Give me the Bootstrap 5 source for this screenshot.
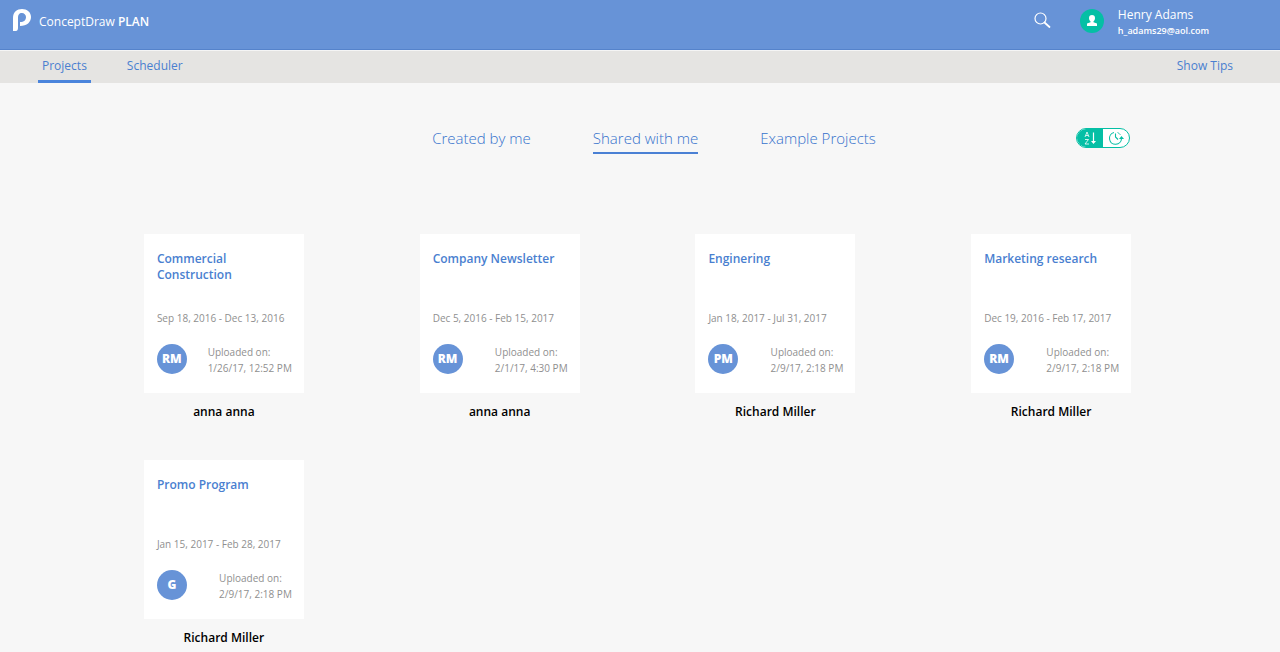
<!DOCTYPE html>
<html lang="en">
<head>
<meta charset="utf-8">
<meta name="viewport" content="width=device-width, initial-scale=1">
<title>ConceptDraw PLAN</title>
<link rel="stylesheet" href="https://cdn.jsdelivr.net/npm/bootstrap@5.3.0/dist/css/bootstrap.min.css">
<style>
  body { font-family: "Open Sans", "Noto Sans", sans-serif; font-size: 12px; line-height: 16px; background: #f7f7f7; color: #000; }
  a { text-decoration: none; }
  .topbar { background: #6793d7; height: 50px; padding: 0 71px 0 12px; color: #fff; border-bottom: 1px solid #5583cb; }
  .brand { color: #fff; padding-top: 8px; gap: 8px; line-height: 28px; }
  .tools { padding-top: 6px; }
  .search-btn { margin: 6px 29px 0 0; line-height: 0; }
  .user-link { color: #fff; gap: 14px; font-weight: 500; }
  .user-link svg { margin-top: 3px; }
  .user-text { padding-top: 1px; }
  .mail { font-size: 9px; font-weight: 600; }
  .subnav { background: #e5e4e2; height: 33px; padding: 0 47px 0 38px; border-top: 1px solid #f5f5f5; }
  .main-links { gap: 32px; }
  .subnav a { color: #4a7fd0; padding: 7px 4px 6px; border-bottom: 3px solid transparent; }
  .subnav a.active { border-bottom-color: #4a84dc; }
  .tab-bar { padding: 45px 150px 0 144px; }
  .filter-tabs { gap: 62px; padding-left: 88px; }
  .filter-tabs a { color: #3571cc; font-size: 15px; font-weight: 300; line-height: 20px; padding-bottom: 4px; border-bottom: 2px solid transparent; }
  .filter-tabs a.active { border-bottom-color: #4a80d4; }
  .sort-toggle { width: 54px; height: 20px; border: 1px solid #05bfa5; border-radius: 10px; background: #fff; overflow: hidden; }
  .sort-toggle button { border: 0; padding: 0; line-height: 0; background: none; color: #05bfa5; }
  .sort-toggle button.active { background: #05bfa5; color: #fff; }
  .projects { padding: 80px 91px 0 86px; }
  .project { width: 160px; margin-bottom: 40px; }
  .tile { height: 159px; background: #fff; padding: 17px 12px 0 13px; }
  .tile h2 { font-size: 12px; line-height: 16px; font-weight: 600; height: 59px; color: #4a7fd0; margin: 0; }
  .tile h2 a { color: inherit; }
  .meta { font-size: 10px; color: #8f8f8f; }
  .uploader { padding-top: 18px; }
  .initials { width: 30px; height: 30px; background: #6793d7; color: #fff; font-size: 12px; font-weight: 800; }
  .owner { font-weight: 600; padding-top: 11px; }
</style>
</head>
<body>
<header class="topbar d-flex justify-content-between align-items-start">
  <a href="#" class="brand d-flex">
    <svg width="19" height="24" viewBox="0 0 19 24" aria-hidden="true"><path d="M1 23V10C1 4 5 1 10 1c5 0 9 3 9 8 0 5-4 9-11 9v-4c4 0 6-2 6-5 0-2-2-4-4-4-3 0-4 2-4 5v10c0 2-1 3-2 3z" fill="#fff"/></svg>
    <span>ConceptDraw <span class="fw-semibold">PLAN</span></span>
  </a>
  <div class="tools d-flex align-items-start">
    <button type="button" class="search-btn btn p-0 border-0" aria-label="Search">
      <svg width="17" height="17" viewBox="0 0 17 17" fill="none" stroke="#fff"><circle cx="6.500" cy="6.500" r="5.500" stroke-width="1.200"/><path d="M10.500 10.500L15.500 15" stroke-width="1.800" stroke-linecap="round"/></svg>
    </button>
    <a href="#" class="user-link d-flex">
      <svg width="24" height="24" viewBox="0 0 24 24" aria-hidden="true"><circle cx="12" cy="12" r="12" fill="#05bfa5"/><path d="M12 6c-2 0-3 1.300-3 3 0 1.500.6 2.600 1.500 3.200v1L7 14.500V17h10v-2.500l-3.500-1.300v-1c.9-.6 1.500-1.700 1.500-3.200 0-1.700-1-3-3-3z" fill="#fff"/></svg>
      <span class="user-text d-flex flex-column"><span>Henry Adams</span><span class="mail">h_adams29@aol.com</span></span>
    </a>
  </div>
</header>
<nav class="subnav d-flex justify-content-between align-items-start" aria-label="Main">
  <div class="main-links d-flex"><a href="#" class="active" aria-current="page">Projects</a><a href="#">Scheduler</a></div>
  <a href="#" class="px-0">Show Tips</a>
</nav>
<main>
  <div class="tab-bar d-flex justify-content-between align-items-start">
    <span></span>
    <nav class="filter-tabs d-flex" aria-label="Project lists">
      <a href="#">Created by me</a><a href="#" class="active" aria-current="page">Shared with me</a><a href="#">Example Projects</a>
    </nav>
    <div class="sort-toggle d-flex" role="group" aria-label="Sort order">
      <button type="button" class="active flex-fill" aria-label="Sort by name"><svg width="26" height="18" viewBox="0 0 26 18" fill="none" stroke="currentColor"><path d="M8 8l2-5 2 5M8.700 6.500h2.600M8 10.500h3.500l-3.500 4.500h4" stroke-width=".8"/><path d="M16.500 3.500v10" stroke-width="1.200"/><path d="M14 12h5l-2.500 3z" fill="currentColor" stroke="none"/></svg></button>
      <button type="button" class="flex-fill" aria-label="Sort by date"><svg width="26" height="18" viewBox="0 0 26 18" fill="none" stroke="currentColor" stroke-width="1.100"><path d="M11 3.500A6 6 0 1 0 18.500 9.500"/><path d="M12.500 4.500V8l2.500 2.500"/><path d="M14.500 3.500A6 6 0 0 1 17.500 6" stroke-width=".8"/><path d="M16 10l2.500-3 2.500 3z" fill="currentColor" stroke="none"/></svg></button>
    </div>
  </div>
  <section class="projects">
    <div class="row row-cols-4 g-0">
      <div class="col d-flex justify-content-center"><article class="project"><div class="tile"><h2><a href="#">Commercial Construction</a></h2><div class="meta">Sep 18, 2016 - Dec 13, 2016</div><div class="uploader d-flex justify-content-between align-items-start"><span class="initials rounded-circle d-flex align-items-center justify-content-center">RM</span><div class="meta">Uploaded on:<br>1/26/17, 12:52 PM</div></div></div><div class="owner text-center">anna anna</div></article></div>
      <div class="col d-flex justify-content-center"><article class="project"><div class="tile"><h2><a href="#">Company Newsletter</a></h2><div class="meta">Dec 5, 2016 - Feb 15, 2017</div><div class="uploader d-flex justify-content-between align-items-start"><span class="initials rounded-circle d-flex align-items-center justify-content-center">RM</span><div class="meta">Uploaded on:<br>2/1/17, 4:30 PM</div></div></div><div class="owner text-center">anna anna</div></article></div>
      <div class="col d-flex justify-content-center"><article class="project"><div class="tile"><h2><a href="#">Enginering</a></h2><div class="meta">Jan 18, 2017 - Jul 31, 2017</div><div class="uploader d-flex justify-content-between align-items-start"><span class="initials rounded-circle d-flex align-items-center justify-content-center">PM</span><div class="meta">Uploaded on:<br>2/9/17, 2:18 PM</div></div></div><div class="owner text-center">Richard Miller</div></article></div>
      <div class="col d-flex justify-content-center"><article class="project"><div class="tile"><h2><a href="#">Marketing research</a></h2><div class="meta">Dec 19, 2016 - Feb 17, 2017</div><div class="uploader d-flex justify-content-between align-items-start"><span class="initials rounded-circle d-flex align-items-center justify-content-center">RM</span><div class="meta">Uploaded on:<br>2/9/17, 2:18 PM</div></div></div><div class="owner text-center">Richard Miller</div></article></div>
      <div class="col d-flex justify-content-center"><article class="project mb-0"><div class="tile"><h2><a href="#">Promo Program</a></h2><div class="meta">Jan 15, 2017 - Feb 28, 2017</div><div class="uploader d-flex justify-content-between align-items-start"><span class="initials rounded-circle d-flex align-items-center justify-content-center">G</span><div class="meta">Uploaded on:<br>2/9/17, 2:18 PM</div></div></div><div class="owner text-center">Richard Miller</div></article></div>
    </div>
  </section>
</main>
<script src="https://cdn.jsdelivr.net/npm/bootstrap@5.3.0/dist/js/bootstrap.bundle.min.js"></script>
</body>
</html>
